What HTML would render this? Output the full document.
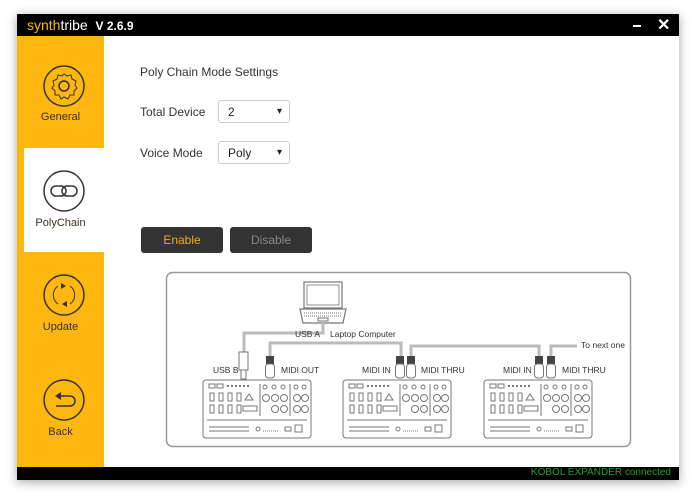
<!DOCTYPE html>
<html><head><meta charset="utf-8"><style>
body{margin:0;width:696px;height:500px;background:#fff;position:relative;overflow:hidden;font-family:"Liberation Sans",sans-serif;}
.win{position:absolute;left:17px;top:14px;width:662px;height:466px;background:#fff;box-shadow:0 2px 10px rgba(0,0,0,.35);}
.title{position:absolute;left:0;top:0;width:662px;height:22px;background:#000;}
.title .t{position:absolute;left:10px;top:3px;font-size:14px;color:#fff;}
.side{position:absolute;left:0;top:22px;width:87px;height:431px;background:#fdb70f;}
.tab{position:absolute;left:7px;top:112px;width:80px;height:104px;background:#fff;}
.lbl{position:absolute;width:87px;text-align:center;font-size:11px;color:#3a3020;}
.bottom{position:absolute;left:0;top:453px;width:662px;height:13px;background:#000;}
.bottom span{position:absolute;right:8px;top:0px;font-size:10px;color:#1fa21f;}
.txt{position:absolute;font-size:12px;color:#333;}
.sel{position:absolute;width:72px;height:23px;border:1px solid #ccc;border-radius:3px;font-size:12px;color:#222;box-sizing:border-box;padding:4px 0 0 9px;}
.sel:after{content:"▾";position:absolute;right:7px;top:5px;font-size:10px;}
.btn{position:absolute;top:213px;width:82px;height:26px;background:#333;border-radius:3px;text-align:center;line-height:26px;font-size:12px;}
</style></head><body>
<div class="win">
 <div class="title"><div class="t"><span style="color:#fdb70f">synth</span>tribe&nbsp; <b style="font-size:12px">V 2.6.9</b></div>
  <div style="position:absolute;left:616px;top:11px;width:8px;height:2px;background:#fff"></div>
  <div style="position:absolute;left:640px;top:1px;color:#fff;font-size:16px;font-weight:bold">✕</div></div>
 <div class="side">
  <div class="tab"></div>
  <svg width="87" height="431" style="position:absolute;left:0;top:0" fill="none" stroke="#333" stroke-width="1.5">
   <circle cx="47" cy="50" r="20"/><circle cx="47" cy="50" r="5"/>
   <path d="M47 38l3 2 4-1 1 4 4 2-1 4 2 3-3 3 0 4-4 0-2 4-4-2-3 2-2-4-4 0 0-4-3-3 2-3-1-4 4-2 1-4 4 1z" stroke-width="1"/>
   <circle cx="47" cy="155" r="20"/><rect x="34" y="150" width="15" height="10" rx="5"/><rect x="45" y="150" width="15" height="10" rx="5"/>
   <circle cx="47" cy="259" r="20"/><path d="M41 250a11 11 0 0 0 0 18M53 250a11 11 0 0 1 0 18" stroke-width="1"/>
   <path d="M44 247l5 3-5 3z M50 265l-5 3 5 3z" fill="#333" stroke="none"/>
   <circle cx="47" cy="364" r="20"/><path d="M42 360h11a5 5 0 0 1 0 10h-14" />
   <path d="M38 360l6-4v8z" fill="#333" stroke="none"/>
  </svg>
  <div class="lbl" style="top:75px">General</div>
  <div class="lbl" style="top:181px;left:0">PolyChain</div>
  <div class="lbl" style="top:285px">Update</div>
  <div class="lbl" style="top:390px">Back</div>
 </div>
 <div class="txt" style="left:123px;top:51px">Poly Chain Mode Settings</div>
 <div class="txt" style="left:123px;top:91px">Total Device</div>
 <div class="sel" style="left:201px;top:86px">2</div>
 <div class="txt" style="left:123px;top:132px">Voice Mode</div>
 <div class="sel" style="left:201px;top:127px">Poly</div>
 <div class="btn" style="left:124px;color:#f5a81c">Enable</div>
 <div class="btn" style="left:213px;color:#888">Disable</div>
 <div class="bottom"><span>KOBOL EXPANDER connected</span></div>
</div>
<svg width="696" height="500" style="position:absolute;left:0;top:0" font-family="Liberation Sans, sans-serif" font-size="8.5" fill="none" stroke="#777">
 <defs>
  <g id="dev" stroke="#777" stroke-width="1" fill="none">
   <rect x="0" y="0" width="108" height="58" rx="3"/>
   <path d="M4 40h100"/>
   <rect x="6" y="4" width="6" height="4"/><rect x="14" y="4" width="6" height="4"/>
   <path d="M24 6h22" stroke-dasharray="2 2" stroke-width="2"/>
   <rect x="7" y="13" width="4" height="8"/><rect x="16" y="13" width="4" height="8"/><rect x="25" y="13" width="4" height="8"/><rect x="34" y="13" width="4" height="8"/>
   <rect x="7" y="25" width="4" height="8"/><rect x="16" y="25" width="4" height="8"/><rect x="25" y="25" width="4" height="8"/><rect x="34" y="25" width="4" height="8"/>
   <path d="M42 20l4-6 4 6z"/><rect x="40" y="26" width="14" height="5"/>
   <path d="M57 4v32M87 4v32"/>
   <circle cx="62" cy="7" r="2"/><circle cx="71" cy="7" r="2"/><circle cx="80" cy="7" r="2"/><circle cx="93" cy="7" r="2"/><circle cx="101" cy="7" r="2"/>
   <circle cx="63" cy="18" r="3.5"/><circle cx="72" cy="18" r="3.5"/><circle cx="81" cy="18" r="3.5"/><circle cx="94" cy="18" r="3.5"/><circle cx="102" cy="18" r="3.5"/>
   <circle cx="72" cy="29" r="3.5"/><circle cx="81" cy="29" r="3.5"/><circle cx="94" cy="29" r="3.5"/><circle cx="102" cy="29" r="3.5"/>
   <path d="M6 47h40M6 51h40"/><rect x="82" y="47" width="6" height="4"/><rect x="92" y="45" width="7" height="7"/>
   <circle cx="55" cy="49" r="2"/><path d="M60 51h16" stroke-dasharray="1 1"/>
  </g>
 </defs>
 <rect x="166.5" y="272.5" width="464" height="174" rx="6" stroke="#999" stroke-width="1.5"/>
 <use href="#dev" x="203" y="380"/><use href="#dev" x="343" y="380"/><use href="#dev" x="484" y="380"/>
 <rect x="304" y="282" width="38" height="26" stroke-width="1.2"/><rect x="307" y="285" width="32" height="20" stroke-width=".8"/>
 <path d="M300 309h46l-3 14h-40z" stroke-width="1.2"/><path d="M304 313h38M304 316h38" stroke-dasharray="1 1"/>
 <rect x="318" y="318" width="10" height="3"/>
 <g stroke="#bbb" stroke-width="3">
  <path d="M323 323v10h-79v20"/>
  <path d="M270 360v-17h131v15"/>
  <path d="M411 358v-12h128v12"/>
  <path d="M551 358v-12h26"/>
 </g>
 <g stroke="#777" stroke-width="1">
  <rect x="239" y="352" width="9" height="18" fill="#fff"/><rect x="241" y="370" width="5" height="9" fill="#fff"/>
 </g>
 <g fill="#444" stroke="none">
  <rect x="266" y="356" width="8" height="8"/><rect x="396" y="356" width="8" height="8"/><rect x="407" y="356" width="8" height="8"/>
  <rect x="535" y="356" width="8" height="8"/><rect x="547" y="356" width="8" height="8"/>
 </g>
 <g fill="#fff" stroke="#777">
  <rect x="265.5" y="364" width="9" height="14" rx="3"/><rect x="395.5" y="364" width="9" height="14" rx="3"/><rect x="406.5" y="364" width="9" height="14" rx="3"/>
  <rect x="534.5" y="364" width="9" height="14" rx="3"/><rect x="546.5" y="364" width="9" height="14" rx="3"/>
 </g>
 <g fill="#333" stroke="none">
  <text x="295" y="337">USB A</text><text x="330" y="337">Laptop Computer</text>
  <text x="213" y="373">USB B</text><text x="281" y="373">MIDI OUT</text>
  <text x="362" y="373">MIDI IN</text><text x="421" y="373">MIDI THRU</text>
  <text x="503" y="373">MIDI IN</text><text x="562" y="373">MIDI THRU</text>
  <text x="581" y="348">To next one</text>
 </g>
</svg>
</body></html>
